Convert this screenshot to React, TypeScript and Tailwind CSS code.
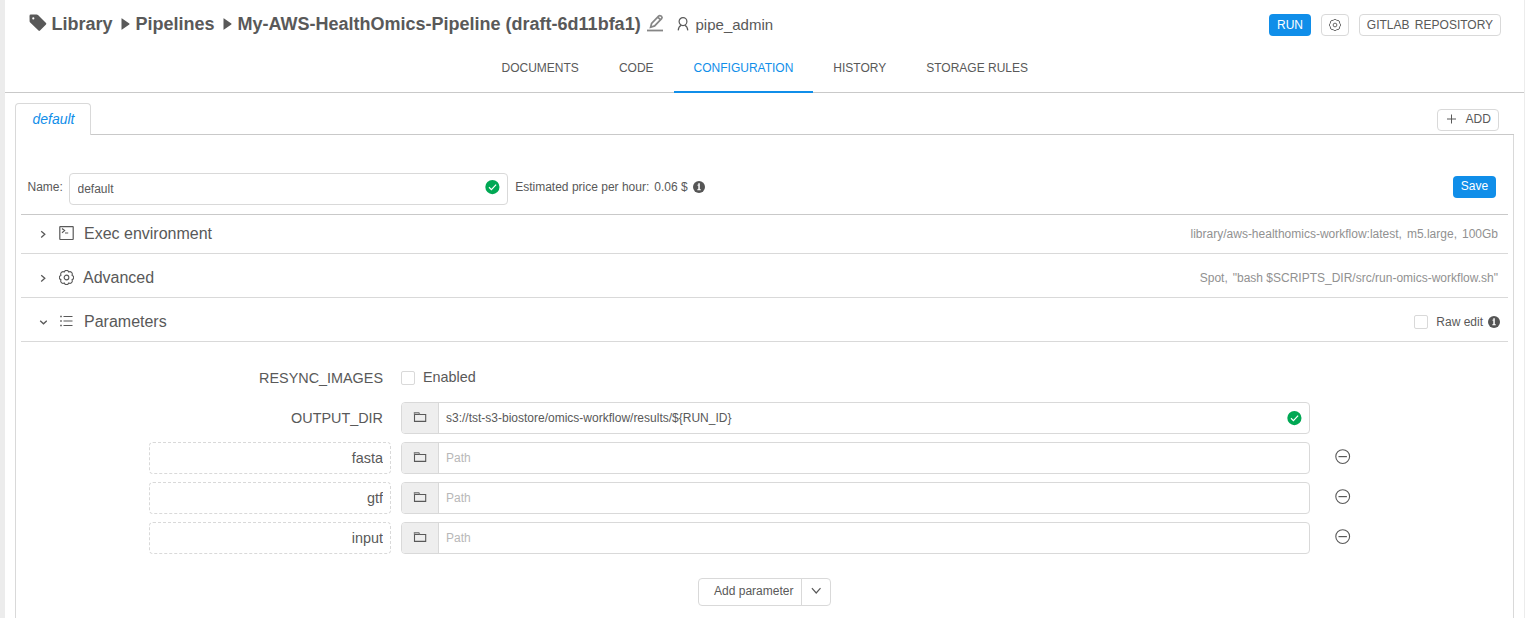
import type { ReactNode } from 'react';

const TagIcon = () => (
  <svg className="h-[18px] w-[18px] shrink-0" viewBox="0 0 18 18" fill="currentColor">
    <path
      fillRule="evenodd"
      d="M1.8 .6 7.6 .5Q8.4 .5 9 1.1L17 9q.7.7 0 1.5L11 16.6q-.8.7-1.5 0L1.2 8.6Q.6 8 .6 7.2L.5 1.9Q.5 .6 1.8 .6ZM4.3 3.3a1.1 1.1 0 1 0 0 2.2 1.1 1.1 0 0 0 0-2.2Z"
    />
  </svg>
);

const CaretIcon = () => (
  <svg className="h-[12px] w-[9px] shrink-0" viewBox="0 0 9 12" fill="currentColor">
    <path d="M.5.6Q.5-.1 1.1.4L8.3 5.5Q8.8 6 8.3 6.5L1.1 11.6Q.5 12 .5 11.4Z" />
  </svg>
);

const EditIcon = () => (
  <svg className="h-[18px] w-[18px] shrink-0 text-[#868686]" viewBox="0 0 18 18" fill="none" stroke="currentColor">
    <path d="M1 16.5h16" strokeWidth="1.8" />
    <path d="M4.6 13.2 5.6 9.4 12.6 2.1q1-1 2.2-.2l.8.6q1 1 0 2.2L8.6 11.9ZM11.8 3.2l2.8 2.6" strokeWidth="1.7" />
  </svg>
);

const UserIcon = () => (
  <svg className="h-[14px] w-[12px] shrink-0" viewBox="0 0 12 14" fill="none" stroke="currentColor" strokeWidth="1.2">
    <ellipse cx="6" cy="4.6" rx="3.9" ry="4" />
    <path d="M1.2 13.4c.2-2.9 1.4-4.4 3.1-5.1M10.8 13.4c-.2-2.9-1.4-4.4-3.1-5.1" />
  </svg>
);

const GearIcon = ({ className }: { className: string }) => (
  <svg className={className} viewBox="0 0 16 16" fill="none" stroke="currentColor" strokeWidth="1.2">
    <path d="M5.55 2.09A2.6 2.6 0 0 1 10.45 2.09A2.6 2.6 0 0 1 13.91 5.55A2.6 2.6 0 0 1 13.91 10.45A2.6 2.6 0 0 1 10.45 13.91A2.6 2.6 0 0 1 5.55 13.91A2.6 2.6 0 0 1 2.09 10.45A2.6 2.6 0 0 1 2.09 5.55A2.6 2.6 0 0 1 5.55 2.09Z" />
    <circle cx="8" cy="8" r="2.5" />
  </svg>
);

const CodeIcon = () => (
  <svg className="mb-[2px] h-[15px] w-[15px] shrink-0" viewBox="0 0 15 15" fill="none" stroke="currentColor" strokeWidth="1.2">
    <rect x=".8" y=".7" width="13.4" height="12.8" rx=".4" />
    <path d="M3 2.5 5.6 4.6 3 6.7M6 7h3.2" />
  </svg>
);

const ListIcon = () => (
  <svg className="h-[15px] w-[15px] shrink-0" viewBox="0 0 15 15" fill="none" stroke="currentColor">
    <path d="M4.5 2.5h9M4.5 7h9M4.5 11.5h9" strokeWidth="1.1" />
    <path d="M1.2 2.5h1.6M1.2 7h1.6M1.2 11.5h1.6" strokeWidth="1.5" />
  </svg>
);

const FolderIcon = () => (
  <svg className="h-[12px] w-[14px]" viewBox="0 0 14 12" fill="none" stroke="currentColor" strokeWidth="1.1">
    <path d="M1.5 3.5h11.2v6.9H1.5Z" />
    <path d="M1.5 3.2V1.8h4.2l1 1.4" stroke="#888" strokeWidth="1.4" />
  </svg>
);

const CheckBadge = () => (
  <svg className="h-[15px] w-[15px] shrink-0" viewBox="0 0 15 15">
    <circle cx="7.4" cy="7.1" r="7.1" fill="#00a854" />
    <path d="M4 7.3 6.4 9.6 11.1 4.7" fill="none" stroke="#fff" strokeWidth="1.2" />
  </svg>
);

const InfoBadge = () => (
  <svg className="h-[12px] w-[12px] shrink-0" viewBox="0 0 12 12">
    <circle cx="6" cy="6" r="6" fill="#555" />
    <path d="M5.3 2.2h1.5v6h1v1H4.3v-1h1V4.6h-1v-.9h1Z" fill="#fff" />
  </svg>
);

const MinusIcon = () => (
  <svg className="h-[16px] w-[16px]" viewBox="0 0 16 16" fill="none" stroke="currentColor">
    <circle cx="7.7" cy="7.6" r="6.9" strokeWidth="1.1" />
    <path d="M3.5 7.6h8.4" strokeWidth="1.2" />
  </svg>
);

const Chevron = ({ open }: { open?: boolean }) => (
  <svg className="h-[8px] w-[8px] shrink-0" viewBox="0 0 8 8" fill="none" stroke="currentColor" strokeWidth="1.3">
    <path d={open ? 'M1.2 2.7 4.5 5.8 7.8 2.7' : 'M2.2 1.2 5.8 4.3 2.2 7.4'} />
  </svg>
);

const Checkbox = () => <span className="block h-[14px] w-[14px] shrink-0 rounded-[2px] border border-[#d9d9d9] bg-white" />;

const tabs = ['DOCUMENTS', 'CODE', 'CONFIGURATION', 'HISTORY', 'STORAGE RULES'];

interface SectionProps {
  icon: ReactNode;
  title: string;
  titleClass?: string;
  open?: boolean;
  children: ReactNode;
  className: string;
}

function Section({ icon, title, titleClass = 'ml-[10px]', open, children, className }: SectionProps) {
  return (
    <div className={`flex items-center border-b border-[#d9d9d9] pl-[18px] ${className}`}>
      <Chevron open={open} />
      <div className="ml-3">{icon}</div>
      <h2 className={`text-[16px] leading-5 ${titleClass}`}>{title}</h2>
      <div className="ml-auto flex items-center">{children}</div>
    </div>
  );
}

function PathInput({ value, valid }: { value?: string; valid?: boolean }) {
  return (
    <div className="ml-[10px] flex h-8 w-[909px] overflow-hidden rounded-[4px] border border-[#d9d9d9]">
      <div className="flex w-[37px] items-center justify-center border-r border-[#d9d9d9] bg-[#eee] pb-[2px]">
        <FolderIcon />
      </div>
      <input className="min-w-0 flex-1 px-[7px] text-[12px] outline-none placeholder:text-[#b8b8b8]" defaultValue={value} placeholder="Path" />
      {valid && <div className="flex items-center pr-[7px]"><CheckBadge /></div>}
    </div>
  );
}

export default function App() {
  return (
    <div className="h-[618px] overflow-hidden border-r border-l-[5px] border-r-[#ececec] border-l-[#ececec] bg-white font-['Liberation_Sans',Arial,sans-serif] text-[12px] leading-[18px] text-[#595959]">
      <header className="flex h-[49px] items-center pr-[23px] pl-6">
        <div className="flex items-center pb-[2px] text-[18px] font-bold">
          <div className="mb-px"><TagIcon /></div>
          <span className="ml-[4.5px]">Library</span>
          <span className="mr-[6px] ml-[8px]"><CaretIcon /></span>
          <span>Pipelines</span>
          <span className="mr-[6px] ml-[8px]"><CaretIcon /></span>
          <span>My-AWS-HealthOmics-Pipeline (draft-6d11bfa1)</span>
        </div>
        <div className="mb-[3px] ml-[5.5px]"><EditIcon /></div>
        <div className="ml-[13px] flex items-center gap-[6.4px] text-[15px]">
          <div className="mb-px"><UserIcon /></div>
          <span>pipe_admin</span>
        </div>
        <div className="ml-auto flex gap-[10px]">
          <button className="h-[22px] w-[42px] rounded-[4px] bg-[#108ee9] text-white">RUN</button>
          <button className="flex h-[22px] w-[28px] items-center justify-center rounded-[4px] border border-[#d9d9d9]">
            <GearIcon className="h-[12px] w-[12px]" />
          </button>
          <button className="h-[22px] w-[142px] rounded-[4px] border border-[#d9d9d9] [word-spacing:2px]">GITLAB REPOSITORY</button>
        </div>
      </header>

      <nav className="flex h-11 justify-center border-b border-[#c9c9c9] pl-[0.6px]">
        {tabs.map((tab) => (
          <a key={tab} className={`h-11 px-5 pt-[10px] ${tab === 'CONFIGURATION' ? 'border-b-2 border-[#108ee9] text-[#108ee9]' : ''}`}>
            {tab}
          </a>
        ))}
      </nav>

      <main className="px-[10px] pt-[10px]">
        <div className="flex h-8">
          <div className="h-8 w-[76px] rounded-t-[4px] border border-b-0 border-[#d9d9d9] pt-[6px] pl-px text-center text-[14px] text-[#108ee9] italic">default</div>
          <div className="flex flex-1 items-start justify-end border-b border-[#c9c9c9] pt-[6px] pr-[15px]">
            <button className="flex h-[22px] w-[62px] items-center rounded-[4px] border border-[#d9d9d9] pb-[2px] pl-[8px]">
              <svg className="h-[11px] w-[11px]" viewBox="0 0 11 11" stroke="currentColor">
                <path d="M5.5 .5v9M1 5h9" />
              </svg>
              <span className="ml-[8.5px]">ADD</span>
            </button>
          </div>
        </div>

        <div className="h-[500px] border-x border-[#d9d9d9] px-[5px] pt-[31px]">
          <div className="flex h-[49px] items-start border-b border-[#c9c9c9] pt-[7px] pr-3 pl-[6.5px]">
            <label className="mt-[5px] w-[41.5px]">Name:</label>
            <div className="flex h-8 w-[439px] items-center rounded-[4px] border border-[#d9d9d9] pr-[7px] pl-[7.5px]">
              <input className="min-w-0 flex-1 text-[12px] outline-none" defaultValue="default" />
              <div className="mb-[3px]"><CheckBadge /></div>
            </div>
            <div className="mt-[5px] ml-[7.2px] flex items-center gap-[5px]">
              <span>Estimated price per hour:<span className="ml-[5px]">0.06 $</span></span>
              <InfoBadge />
            </div>
            <button className="mt-[3px] ml-auto h-[22px] w-[43px] rounded-[4px] bg-[#108ee9] pb-[2px] text-white">Save</button>
          </div>

          <Section className="h-[39px]" icon={<CodeIcon />} title="Exec environment">
            <div className="flex gap-[5px] pr-[10px] text-[#919191]">
              <span>library/aws-healthomics-workflow:latest,</span>
              <span>m5.large,</span>
              <span>100Gb</span>
            </div>
          </Section>
          <Section className="h-11 pt-[4px]" icon={<GearIcon className="h-[15px] w-[15px]" />} title="Advanced" titleClass="ml-[9px]">
            <div className="flex gap-[5px] pr-[10px] text-[#919191]">
              <span>Spot,</span>
              <span>"bash $SCRIPTS_DIR/src/run-omics-workflow.sh"</span>
            </div>
          </Section>
          <Section className="h-11 pt-[4px]" icon={<ListIcon />} title="Parameters" open>
            <div className="flex items-center pr-2">
              <Checkbox />
              <span className="mr-[5px] ml-2">Raw edit</span>
              <InfoBadge />
            </div>
          </Section>

          <div className="mt-5 flex flex-col gap-2 pl-32">
            <div className="flex h-8 items-center">
              <span className="w-[234px] text-right text-[14.4px]">RESYNC_IMAGES</span>
              <div className="ml-[18px] flex items-center gap-2 text-[14.4px]">
                <Checkbox />
                <span className="mb-[2px]">Enabled</span>
              </div>
            </div>
            <div className="flex h-8 items-center">
              <span className="mr-2 w-[234px] text-right text-[14.4px]">OUTPUT_DIR</span>
              <PathInput value="s3://tst-s3-biostore/omics-workflow/results/${RUN_ID}" valid />
            </div>
            {['fasta', 'gtf', 'input'].map((name) => (
              <div key={name} className="flex h-8 items-center">
                <input className="h-8 w-[242px] rounded-[4px] border border-dashed border-[#d9d9d9] px-[7px] text-right text-[14.4px] outline-none" defaultValue={name} />
                <PathInput />
                <button className="mb-[3px] ml-[25px]"><MinusIcon /></button>
              </div>
            ))}
          </div>

          <div className="mt-6 flex justify-center">
            <button className="h-7 w-[104px] rounded-l-[4px] border border-[#d9d9d9] pb-[2px] pl-[7.5px]">Add parameter</button>
            <button className="-ml-px flex h-7 w-[30px] items-center justify-center rounded-r-[4px] border border-[#d9d9d9] pb-[3px]">
              <svg className="h-[10px] w-[10px]" viewBox="0 0 10 10" fill="none" stroke="currentColor" strokeWidth="1.2">
                <path d="M.9 2.2 5.2 7 9.5 2.2" />
              </svg>
            </button>
          </div>
        </div>
      </main>
    </div>
  );
}
